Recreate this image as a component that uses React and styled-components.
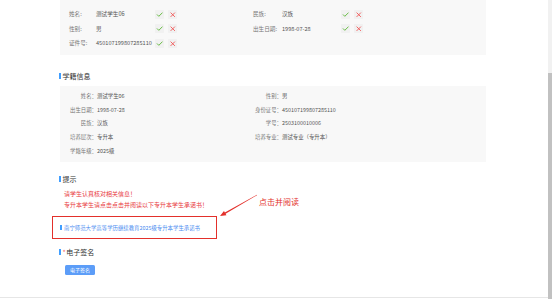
import React from "react";
import styled, { createGlobalStyle } from "styled-components";
import { Check, X } from "lucide-react";

const GlobalStyle = createGlobalStyle`
	html, body {
		margin: 0;
		padding: 0;
		background: #fff;
	}
	body {
		font-family: "Noto Sans CJK SC", "Noto Sans", sans-serif;
	}
	* {
		box-sizing: border-box;
	}
`;

const basicFields = [
	{ label: "姓名:", value: "测试学生06", w: 27 },
	{ label: "民族:", value: "汉族", w: 29 },
	{ label: "性别:", value: "男", w: 27 },
	{ label: "出生日期:", value: "1998-07-28", w: 29 },
	{ label: "证件号:", value: "450107199807285110", w: 27 },
];

const studentFields = [
	["姓名", "测试学生06"],
	["性别", "男"],
	["出生日期", "1998-07-28"],
	["身份证号", "450107199807285110"],
	["民族", "汉族"],
	["学号", "2503100010006"],
	["培养层次", "专升本"],
	["培养专业", "测试专业（专升本）"],
	["学籍年级", "2025级"],
];

const App = () => {
	return (
		<>
			<GlobalStyle />
			<Screen>
				<Main>
					<Content>
						<CheckCard>
							{basicFields.map((f) => (
								<Field key={f.label}>
									<FieldLabel $w={f.w}>{f.label}</FieldLabel>
									<FieldValue>{f.value}</FieldValue>
									<IconBtn $tone="#5fb83a">
										<Check size={7.5} strokeWidth={3} />
									</IconBtn>
									<IconBtn $tone="#f05a5a">
										<X size={7.5} strokeWidth={3} />
									</IconBtn>
								</Field>
							))}
						</CheckCard>

						<SectionTitle $mt={16} $mb={5}>学籍信息</SectionTitle>
						<InfoCard>
							{studentFields.map(([k, v]) => (
								<InfoItem key={k}>
									<InfoLabel>{k}：</InfoLabel>
									<InfoValue>{v}</InfoValue>
								</InfoItem>
							))}
						</InfoCard>

						<SectionTitle $mt={12} $mb={3.5}>提示</SectionTitle>
						<TipLine>请学生认真核对相关信息！</TipLine>
						<TipLine>专升本学生请点击点击并阅读以下专升本学生承诺书！</TipLine>

						<MarkedBox>
							<DocLink>南宁师范大学高等学历继续教育2025级专升本学生承诺书</DocLink>
							<Arrow width="45" height="28" viewBox="0 0 45 28">
								<polygon
									points="39.9,2.83 40.1,3.17 8.57,21.65 9.46,23.2 3,24 6.98,18.9 7.87,20.43"
									fill="#e3302b"
								/>
							</Arrow>
							<Callout>点击并阅读</Callout>
						</MarkedBox>

						<SectionTitle $mt={8} $mb={8}>
							<Required>*</Required>电子签名
						</SectionTitle>
						<SignButton>电子签名</SignButton>
					</Content>
				</Main>
				<ScrollTrack>
					<ScrollThumb />
				</ScrollTrack>
			</Screen>
		</>
	);
};

const Screen = styled.div`
	display: flex;
	width: 553px;
	height: 299px;
	overflow: hidden;
	background: #fff;
`;

const Main = styled.main`
	flex: 1;
	height: 298px;
	border-bottom: 1px solid #e6e6e6;
	overflow: hidden;
`;

const Content = styled.div`
	padding-left: 60px;
	display: flex;
	flex-direction: column;
	align-items: flex-start;
`;

const CheckCard = styled.div`
	width: 426px;
	background: #f8f8f8;
	padding: 7px 0 4px 9px;
	display: grid;
	grid-template-columns: 184px 1fr;
	grid-auto-rows: 14.5px;
`;

const Field = styled.div`
	display: flex;
	align-items: center;
	font-size: 5.6px;
	color: #555;
`;

const FieldLabel = styled.span`
	width: ${({ $w }) => $w}px;
	color: #777;
	white-space: nowrap;
`;

const FieldValue = styled.span`
	width: 59px;
	white-space: nowrap;
`;

const IconBtn = styled.span`
	width: 9px;
	height: 9px;
	margin-right: 4px;
	display: flex;
	align-items: center;
	justify-content: center;
	background: #f1f1f1;
	border-radius: 1px;
	color: ${({ $tone }) => $tone};
`;

const SectionTitle = styled.div`
	display: flex;
	align-items: center;
	margin: ${({ $mt }) => $mt}px 0 ${({ $mb }) => $mb}px -1px;
	font-size: 7px;
	line-height: 10px;
	color: #333;

	&::before {
		content: "";
		width: 1.5px;
		height: 6px;
		margin-right: 2px;
		background: #409eff;
	}
`;

const Required = styled.span`
	color: #f56c6c;
	margin-right: 0.5px;
`;

const InfoCard = styled.div`
	width: 426px;
	background: #f8f8f8;
	padding: 4px 0 5px;
	display: grid;
	grid-template-columns: 185px 1fr;
	grid-auto-rows: 13.6px;
	align-items: center;
`;

const InfoItem = styled.div`
	display: flex;
	align-items: center;
	font-size: 5.4px;
	color: #555;
`;

const InfoLabel = styled.span`
	width: 37px;
	text-align: right;
	color: #777;
	white-space: nowrap;
`;

const InfoValue = styled.span`
	white-space: nowrap;
`;

const TipLine = styled.div`
	padding-left: 4px;
	font-size: 6px;
	line-height: 11px;
	color: #e8383d;
	white-space: nowrap;
`;

const MarkedBox = styled.div`
	position: relative;
	margin: 6.5px 0 0 -8px;
	width: 165px;
	height: 23px;
	border: 1px solid #e3302b;
	padding-left: 7px;
	display: flex;
	align-items: center;
`;

const DocLink = styled.a`
	display: flex;
	align-items: center;
	font-size: 5.4px;
	color: #4a8cf0;
	white-space: nowrap;
	cursor: pointer;

	&::before {
		content: "";
		width: 1.5px;
		height: 5px;
		margin-right: 2.5px;
		background: #409eff;
	}
`;

const Arrow = styled.svg`
	position: absolute;
	left: 164px;
	top: -25px;
	overflow: visible;
`;

const Callout = styled.span`
	position: absolute;
	left: 206px;
	top: -20px;
	font-size: 8px;
	line-height: 10px;
	color: #e3302b;
	white-space: nowrap;
`;

const SignButton = styled.button`
	margin-left: 5px;
	height: 9.5px;
	padding: 0 5px;
	border: none;
	border-radius: 1.5px;
	background: #5c9df8;
	color: #fff;
	font-family: inherit;
	font-size: 5px;
	line-height: 9.5px;
`;

const ScrollTrack = styled.div`
	width: 4px;
	margin-right: 1px;
	height: 299px;
	background: #f1f1f1;
	display: flex;
	flex-direction: column;
`;

const ScrollThumb = styled.div`
	margin-top: 73px;
	flex: 1;
	background: #c1c1c1;
`;

export default App;
